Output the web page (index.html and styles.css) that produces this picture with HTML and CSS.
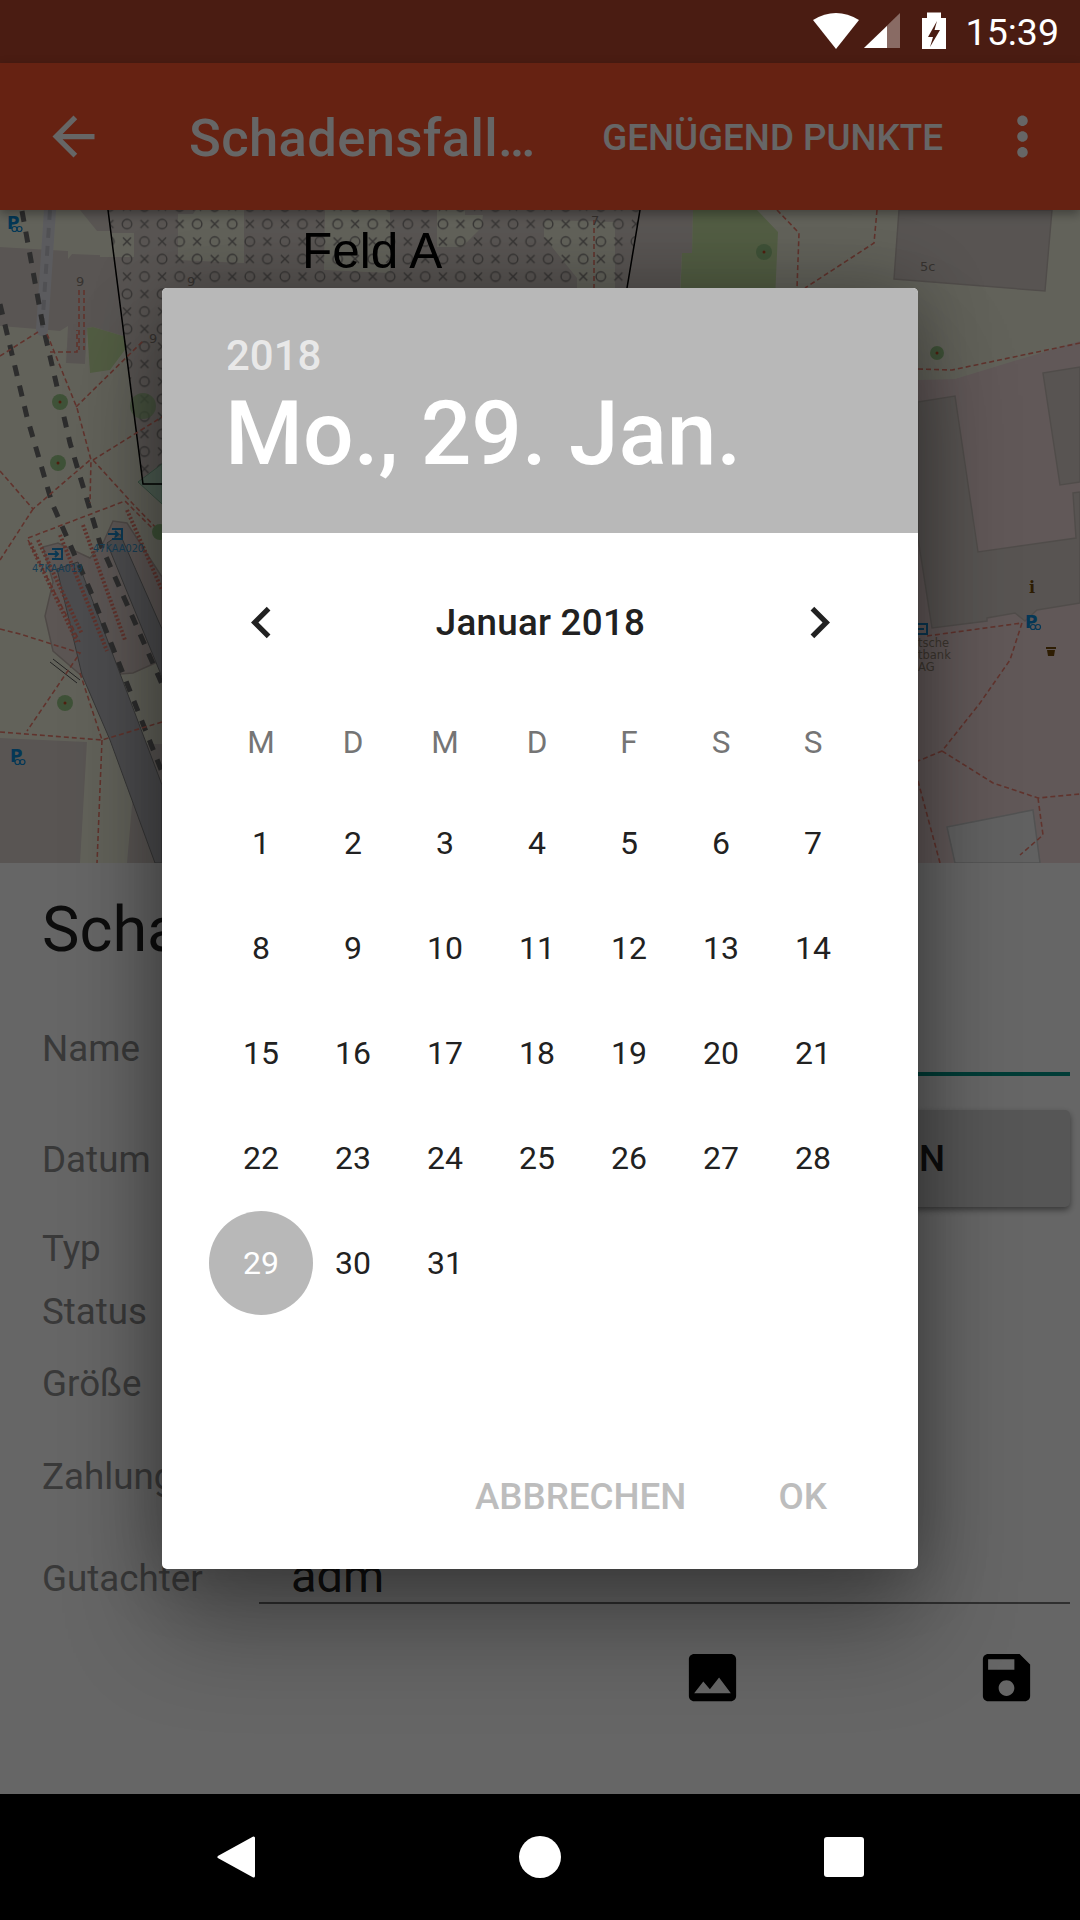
FILE: index.html
```html
<!DOCTYPE html>
<html lang="de">
<head>
<meta charset="utf-8">
<title>Schadensfall</title>
<link rel="stylesheet" href="styles.css">
</head>
<body>
<div class="phone">
  <div class="status">
    <svg class="status-icons" width="140" height="63" viewBox="810 0 140 63">
      <path class="w" d="M813 20Q836 6 859 20L836 49Z"/>
      <path class="w-dim" d="M864 48L900 13V48Z"/>
      <path class="w" d="M864 48L887 26V48Z"/>
      <path class="w" fill-rule="evenodd" d="M927 18V12.500H941V18H946V49H922V18ZM937 21L928 37H933L930 47L940 30H934.500Z"/>
    </svg>
    <span class="clock">15:39</span>
  </div>
  <div class="screen">
    <header class="appbar">
      <svg class="ico63" viewBox="0 0 24 24"><path class="w" d="M20 11H7.830l5.590-5.590L12 4l-8 8 8 8 1.410-1.410L7.830 13H20v-2z"/></svg>
      <span class="app-title">Schadensfall…</span>
      <span class="app-action">GENÜGEND PUNKTE</span>
      <svg class="ico63" viewBox="0 0 24 24"><path class="w" d="M12 8c1.100 0 2-.9 2-2s-.9-2-2-2-2 .9-2 2 .9 2 2 2zm0 2c-1.100 0-2 .9-2 2s.9 2 2 2 2-.9 2-2-.9-2-2-2zm0 6c-1.100 0-2 .9-2 2s.9 2 2 2 2-.9 2-2-.9-2-2-2z"/></svg>
    </header>

    <div class="map">
      <svg class="map-svg" width="1080" height="653" viewBox="0 210 1080 653">
        <defs>
          <pattern id="xo" patternUnits="userSpaceOnUse" x="118.200" y="215.300" width="35.100" height="35">
            <circle class="xo" cx="8.800" cy="8.750" r="4.700"/>
            <path class="xo" d="M22.300 4.800l8 8M30.300 4.800l-8 8M4.800 22.300l8 8M12.800 22.300l-8 8"/>
            <circle class="xo" cx="26.300" cy="26.250" r="4.700"/>
          </pattern>
        </defs>
        <rect class="ground" x="0" y="210" width="1080" height="653"/>
        <!-- right hand pink zone -->
        <path class="pink" d="M918 380L955 379L1080 341V863H918Z"/>
        <!-- left hand buildings -->
        <path class="bld" d="M0 247L68 251V259L72 254L123 256L162 256V339L133 339L93 327L87 328L85 364L66 363L68 326L60 331L37 329L0 326Z"/>
        <path class="bld" d="M80 210L97 231L113 231L108 210Z"/>
        <path class="grass" d="M87 328L93 327L133 339L110 370L90 373Z"/>
        <path class="bld" d="M0 738L87 742L80 863H0Z"/>
        <path class="bld" d="M132 805L140 744H162V863H127Z"/>
        <path class="soft" d="M43 547L58 543L90 558L103 543L113 521L127 523L162 577V660L133 673L83 677L53 651L45 616L53 582Z"/>
        <path class="platform" d="M57 569L78 562L162 785V863H155L110 740L82 675Z"/>
        <path class="platform" d="M107 543L120 534L162 629V677Z"/>
        <!-- farm field -->
        <path class="bld" d="M108 210H693L692 253H682L680 288H625L610 300V484H143Z"/>
        <path class="ground" d="M100 233H134V257H100Z"/>
        <path class="ground" d="M178 214L193 214L196 210H244V263L178 260Z"/>
        <path class="ground" d="M325 210H390V273L324 270Z"/>
        <path class="ground" d="M437 210H465V215H483L481 228L462 247H437Z"/>
        <path class="ground" d="M544 220L615 222V288H577V278L544 237Z"/>
        <path class="field" d="M108 210H640L627 288V484H143Z"/>
        <path class="grass-soft" d="M138 482L162 464V504Z"/>
        <circle class="tree-halo" cx="143" cy="406" r="13"/>
        <path class="edge" d="M108 210L143 484H162M640 210L627 288"/>
        <!-- park -->
        <path class="grass" d="M693 210H757L778 232L775 300H680L682 253H692Z"/>
        <!-- right hand buildings -->
        <path class="bld-line" d="M899 210H1052L1045 291L894 279Z"/>
        <path class="bld-line" d="M918 402L955 396L978 552L1076 538L1073 493L1080 492V603L1037 610L1025 621L1015 613L987 618V621L932 628L918 538Z"/>
        <path class="bld-line" d="M1043 373L1080 367V482L1060 485Z"/>
        <path class="bld-light" d="M947 827L1033 810L1040 863H955Z"/>
        <!-- rail -->
        <path class="bridge" d="M50 210L42 330"/>
        <path class="bridge-dots" d="M50 210L42 330"/>
        <path class="rail" d="M0 304L27 417L52 503L90 590L162 772"/>
        <path class="rail" d="M22 211L43 326L70 443L100 543L162 684"/>
        <path class="thin" d="M50 662L77 683M53 659L80 680"/>
        <!-- footways -->
        <path class="way" d="M0 356L38 332M47 334L77 408L91 460L90 503M50 352H77V330M76 407L143 341M93 460L162 417M93 460L133 504L162 534M0 471L33 509L90 460M33 509L0 560M28 538L125 501L162 538M28 540L80 642M0 629L20 634L80 653L27 731M0 732L102 740L162 722M102 740L97 863M80 673L102 740"/>
        <path class="way-dense" d="M30 543L77 642M38 540L82 634M60 535L107 651M83 525L125 640M127 510L162 590"/>
        <path class="way" d="M79 290V350M84 290V350"/>
        <path class="way" d="M777 210L799 233L797 288M877 210L874 243L805 288M918 369L952 370L1080 343M927 636L1022 623L1010 660L980 703L942 751L918 761M942 751L993 783L1038 798L1080 794M1038 798L1043 835L1020 855M918 781L940 863M594 220V288"/>
        <!-- trees -->
        <g class="trees">
          <circle cx="60" cy="402" r="8"/><circle cx="58" cy="463" r="8"/><circle cx="65" cy="703" r="8"/>
          <circle cx="160" cy="532" r="8"/><circle cx="764" cy="252" r="8"/><circle cx="937" cy="353" r="7"/>
        </g>
        <g class="tree-core">
          <circle cx="60" cy="402" r="1.500"/><circle cx="58" cy="463" r="1.500"/><circle cx="65" cy="703" r="1.500"/>
          <circle cx="764" cy="252" r="1.500"/><circle cx="937" cy="353" r="1.500"/>
        </g>
        <!-- labels -->
        <g class="house-no">
          <text x="187" y="286">9</text><text x="76" y="286">9</text><text x="149" y="343">9</text>
          <text x="591" y="225">7</text><text x="920" y="271">5c</text>
        </g>
        <text class="poi" x="32" y="572">47KAA019</text>
        <text class="poi" x="93" y="552">47KAA020</text>
        <g class="entry">
          <path d="M52 549H62V559H52M48 554H58M55 551L58 554L55 557"/>
          <path d="M112 529H122V539H112M108 534H118M115 531L118 534L115 537"/>
          <path d="M913 624H927V634H913M918 629H924"/>
        </g>
        <text class="park-p" x="7" y="229">P</text>
        <text class="park-p" x="10" y="762">P</text>
        <text class="park-p" x="1025" y="628">P</text>
        <g class="bike">
          <circle cx="14.500" cy="229" r="2.500"/><circle cx="19.500" cy="229" r="2.500"/>
          <circle cx="17.500" cy="762" r="2.500"/><circle cx="22.500" cy="762" r="2.500"/>
          <circle cx="1033" cy="627" r="2.500"/><circle cx="1038" cy="627" r="2.500"/>
        </g>
        <text class="bank" x="918" y="647">tsche</text>
        <text class="bank" x="918" y="659">tbank</text>
        <text class="bank" x="918" y="671">AG</text>
        <text class="info" x="1029" y="593">i</text>
        <path class="bin" d="M1046 647H1056V649H1046ZM1047 650H1055L1054 656H1048Z"/>
        <text class="feld" x="302" y="268">Feld A</text>
      </svg>
    </div>

    <section class="form">
      <h1 class="form-title">Scha</h1>
      <div class="fields">
        <span class="label">Name</span><div class="input input-active"></div>
        <span class="label">Datum</span><div class="date-btn">N</div>
        <span class="label">Typ</span><span></span>
        <span class="label">Status</span><span></span>
        <span class="label">Größe</span><span></span>
        <span class="label">Zahlung</span><span></span>
        <span class="label">Gutachter</span><div class="input input-text">adm</div>
      </div>
      <div class="form-actions">
        <svg class="ico63" viewBox="0 0 24 24"><path d="M21 19V5c0-1.100-.9-2-2-2H5c-1.100 0-2 .9-2 2v14c0 1.100.9 2 2 2h14c1.100 0 2-.9 2-2zM8.500 13.500l2.500 3.010L14.500 12l4.500 6H5l3.500-4.500z"/></svg>
        <svg class="ico63" viewBox="0 0 24 24"><path d="M17 3H5c-1.110 0-2 .9-2 2v14c0 1.100.89 2 2 2h14c1.100 0 2-.9 2-2V7l-4-4zm-5 16c-1.660 0-3-1.340-3-3s1.340-3 3-3 3 1.340 3 3-1.340 3-3 3zm3-10H5V5h10v4z"/></svg>
      </div>
    </section>

    <div class="scrim">
      <div class="dialog">
        <div class="dlg-head">
          <div class="dlg-year">2018</div>
          <div class="dlg-date">Mo., 29. Jan.</div>
        </div>
        <div class="month-row">
          <svg class="ico63" viewBox="0 0 24 24"><path class="ink" d="M15.410 7.410L14 6l-6 6 6 6 1.410-1.410L10.830 12z"/></svg>
          <span class="month">Januar 2018</span>
          <svg class="ico63" viewBox="0 0 24 24"><path class="ink" d="M10 6L8.590 7.410 13.170 12l-4.580 4.590L10 18l6-6z"/></svg>
        </div>
        <div class="cal weekdays">
          <span>M</span><span>D</span><span>M</span><span>D</span><span>F</span><span>S</span><span>S</span>
        </div>
        <div class="cal days">
          <span>1</span><span>2</span><span>3</span><span>4</span><span>5</span><span>6</span><span>7</span>
          <span>8</span><span>9</span><span>10</span><span>11</span><span>12</span><span>13</span><span>14</span>
          <span>15</span><span>16</span><span>17</span><span>18</span><span>19</span><span>20</span><span>21</span>
          <span>22</span><span>23</span><span>24</span><span>25</span><span>26</span><span>27</span><span>28</span>
          <span class="selected">29</span><span>30</span><span>31</span>
        </div>
        <div class="dlg-actions">
          <span>ABBRECHEN</span>
          <span>OK</span>
        </div>
      </div>
    </div>
  </div>
  <nav class="navbar">
    <svg class="nav-ico" width="42" height="42" viewBox="0 0 42 42"><path class="w nav-back" d="M2 21L36.500 2V40Z"/></svg>
    <span class="nav-home"></span>
    <span class="nav-recent"></span>
  </nav>
</div>
</body>
</html>
```
FILE: styles.css
```css
* { box-sizing: border-box; }
html, body { margin: 0; padding: 0; }
body { font-family: Roboto, "Liberation Sans", sans-serif; background: #000; }
.phone { width: 1080px; height: 1920px; display: flex; flex-direction: column; overflow: hidden; }
svg { display: block; flex: none; }
.w { fill: #fff; }
.w-dim { fill: #fff; fill-opacity: .35; }
.ink { fill: #212121; }
.ico63 { width: 63px; height: 63px; }

/* status bar */
.status { height: 63px; flex: none; background: #4a1c12; display: flex; align-items: center; justify-content: flex-end; padding-right: 21px; color: #fff; }
.status-icons { margin-right: 16px; }
.clock { font-size: 37.500px; line-height: 63px; padding-top: 2px; }

.screen { flex: 1; position: relative; display: flex; flex-direction: column; min-height: 0; background: #fff; }

/* app bar */
.appbar { height: 147px; flex: none; background: #ff552f; color: #fff; display: flex; align-items: center; padding: 0 26px 0 42px; position: relative; z-index: 1; box-shadow: 0 4px 10px rgba(0,0,0,.35); }
.app-title { font-size: 52.500px; font-weight: 500; margin-left: 84px; letter-spacing: .4px; white-space: nowrap; padding-top: 2px; }
.app-action { font-size: 36.750px; font-weight: 500; margin-left: auto; margin-right: 48px; white-space: nowrap; padding-top: 2px; }

/* map */
.map { height: 653px; flex: none; overflow: hidden; }
.ground { fill: #f6f6e2; }
.pink { fill: #f2dcdc; }
.bld { fill: #dfd5cf; }
.bld-line { fill: #dbd3cd; stroke: #c9bfb9; stroke-width: 1.500; }
.bld-light { fill: #f2f2f2; stroke: #ccc; stroke-width: 1.500; }
.soft { fill: #e6d8d2; stroke: #c4b6b0; stroke-width: 1.500; }
.platform { fill: #bdbdc2; stroke: #888; stroke-width: 1; }
.grass { fill: #cde8a8; }
.grass-soft { fill: #c4ecd0; stroke: #8cc0a0; stroke-width: 1; }
.tree-halo { fill: #9ec98a; fill-opacity: .7; }
.field { fill: url(#xo); }
.xo { fill: none; stroke: #8a8684; stroke-width: 1.400; }
.edge { fill: none; stroke: #000; stroke-width: 1.500; }
.bridge { fill: none; stroke: #e4e4ec; stroke-width: 12; stroke-linecap: round; }
.bridge-dots { fill: none; stroke: #c8c8d0; stroke-width: 4; stroke-dasharray: 10 8; }
.rail { fill: none; stroke: #707070; stroke-width: 5; stroke-dasharray: 11 10; }
.thin { fill: none; stroke: #555; stroke-width: 1; }
.way { fill: none; stroke: #f08070; stroke-width: 1.600; stroke-dasharray: 5 3; }
.way-dense { fill: none; stroke: #f08070; stroke-width: 4; stroke-dasharray: 2 2; }
.trees circle { fill: #9fcd8c; }
.tree-core circle { fill: #c8502a; }
.house-no text { font: 13px "DejaVu Sans", sans-serif; fill: #8a8078; }
.poi { font: 9.800px "DejaVu Sans", sans-serif; fill: #3d9bd4; }
.entry path { fill: none; stroke: #1d8cd0; stroke-width: 2; }
.park-p { font: bold 17px "DejaVu Sans", sans-serif; fill: #0a8ad6; }
.bike circle { fill: none; stroke: #0a8ad6; stroke-width: 1.200; }
.bank { font: 11.500px "DejaVu Sans", sans-serif; fill: #9a8a78; }
.info { font: bold 16px "DejaVu Serif", serif; fill: #734a08; }
.bin { fill: #734a08; }
.feld { font: 49.500px "Liberation Sans", Arial, sans-serif; fill: #000; }

/* form */
.form { flex: 1; background: #fff; padding-top: 30px; padding-left: 42px; min-height: 0; }
.form-title { margin: 0; font-size: 63px; line-height: 74px; font-weight: 400; color: rgba(0,0,0,.87); white-space: nowrap; }
.fields { margin-top: 60px; display: grid; grid-template-columns: 217px 811px; grid-template-rows: 111px 89px 63px 72px 93px 102px auto; align-items: start; }
.label { font-size: 36.750px; line-height: 44px; color: #8f8f8f; white-space: nowrap; }
.input { height: 48px; }
.input-active { margin-top: 1px; border-bottom: 4px solid #009688; }
.input-text { border-bottom: 2.500px solid #757575; font-size: 47px; line-height: 37px; padding-left: 32px; color: rgba(0,0,0,.87); height: 47px; }
.date-btn { margin: -28px 0 0 -5px; width: 816px; height: 97px; border-radius: 5px; background: #d6d6d6; box-shadow: 0 3px 6px rgba(0,0,0,.45); display: flex; align-items: center; justify-content: flex-end; padding-right: 125px; font-size: 36.750px; font-weight: 500; color: rgba(0,0,0,.87); white-space: nowrap; }
.form-actions { display: flex; justify-content: flex-end; gap: 231px; margin-top: 42px; padding-right: 42px; }

/* scrim + dialog */
.scrim { position: absolute; inset: 0; z-index: 2; background: rgba(0,0,0,.6); display: flex; align-items: center; justify-content: center; }
.dialog { width: 756px; height: 1281px; background: #fff; border-radius: 5px; display: flex; flex-direction: column; box-shadow: 0 60px 100px rgba(0,0,0,.3), 0 0 70px rgba(0,0,0,.3); }
.dlg-head { height: 245px; flex: none; background: #b8b8b8; border-radius: 5px 5px 0 0; color: #fff; padding: 43px 0 0 63px; }
.dlg-year { font-size: 42px; line-height: 50px; font-weight: 500; padding-left: 1px; color: rgba(255,255,255,.7); }
.dlg-date { font-size: 89.250px; line-height: 105px; font-weight: 500; white-space: nowrap; }
.month-row { height: 178px; flex: none; display: flex; align-items: center; justify-content: space-between; padding: 0 67px 0 68px; }
.month { font-size: 36.750px; font-weight: 500; letter-spacing: .25px; color: #212121; }
.cal { display: grid; grid-template-columns: repeat(7, 92px); padding-left: 53px; flex: none; }
.cal span { display: flex; align-items: center; justify-content: center; }
.weekdays { height: 62px; font-size: 31.500px; color: #757575; }
.days { margin-top: 17px; grid-auto-rows: 105px; font-size: 32px; color: #212121; }
.days .selected { width: 104px; height: 104px; justify-self: center; align-self: center; border-radius: 50%; background: #b8b8b8; color: #fff; }
.dlg-actions { margin-top: auto; height: 146px; flex: none; display: flex; align-items: center; justify-content: flex-end; gap: 92px; padding-right: 91px; font-size: 36.750px; font-weight: 500; color: #bdbdbd; }

/* nav bar */
.navbar { height: 126px; flex: none; background: #000; display: flex; align-items: center; }
.nav-back { stroke: #fff; stroke-width: 3; stroke-linejoin: round; }
.nav-ico { margin-left: 217px; }
.nav-home { width: 42px; height: 42px; border-radius: 50%; background: #fff; margin-left: 260px; }
.nav-recent { width: 40px; height: 40px; border-radius: 3px; background: #fff; margin-left: 263px; }
```
